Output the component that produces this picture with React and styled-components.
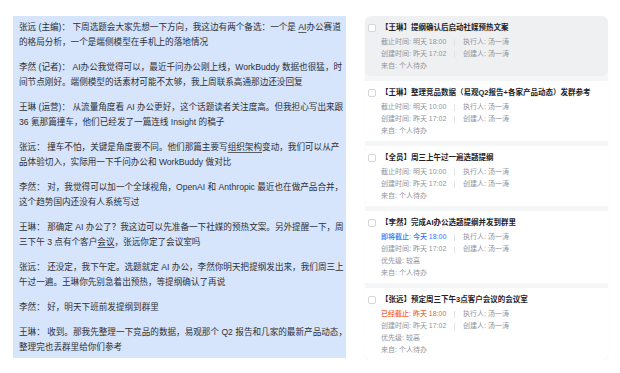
import React from "react";
import styled, { createGlobalStyle } from "styled-components";

const GlobalStyle = createGlobalStyle`
  html, body { margin: 0; padding: 0; background: #ffffff; }
  body {
    font-family: "Liberation Sans", "Noto Sans CJK SC", sans-serif;
    -webkit-font-smoothing: antialiased;
  }
`;

const Page = styled.div`
  display: flex;
  align-items: flex-start;
  gap: 19px;
  padding: 16px 12px 0 13px;
`;

const Transcript = styled.div`
  width: 333px;
  box-sizing: border-box;
  padding: 4px 4px 3px 6px;
  background: #d6e4fc;
  color: #2e3136;
  font-size: 8.6px;
  line-height: 15px;
`;

const Para = styled.p`
  margin: 0 0 10px;
  &:last-child { margin-bottom: 0; }
`;

const Line = styled.span`
  display: block;
  white-space: nowrap;
`;

const Mark = styled.span`
  text-decoration: underline;
  text-decoration-color: #5a5f66;
  text-underline-offset: 2px;
  text-decoration-thickness: 1px;
`;

const TaskList = styled.div`
  width: 243px;
  display: flex;
  flex-direction: column;
  gap: 5px;
  background: #f5f6f7;
  border-radius: 6px;
  overflow: hidden;
  box-shadow: 0 1px 2px rgba(0, 0, 0, 0.04);
`;

const Card = styled.div`
  display: flex;
  align-items: flex-start;
  padding: 5px 8px 4px 3px;
  background: ${(p) => (p.$active ? "#eff0f1" : "#ffffff")};
  border-radius: ${(p) => (p.$active ? "6px" : "0")};
`;

const Check = styled.span`
  flex: none;
  width: 8px;
  height: 8px;
  margin-top: 3px;
  box-sizing: border-box;
  border: 1px solid #d3d6da;
  border-radius: 2px;
  background: #ffffff;
`;

const Body = styled.div`
  margin-left: 5px;
  min-width: 0;
`;

const Title = styled.div`
  font-size: 7.5px;
  line-height: 14px;
  font-weight: 700;
  color: #1f2329;
  white-space: nowrap;
  margin-bottom: 1px;
`;

const MetaRow = styled.div`
  display: flex;
  align-items: center;
  font-size: 7px;
  line-height: 12px;
  color: #8f959e;
  white-space: nowrap;
`;

const MetaCell = styled.span`
  width: ${(p) => (p.$fixed ? "69px" : "auto")};
  color: ${(p) =>
    p.$tone === "soon" ? "#3370ff" : p.$tone === "late" ? "#f5602f" : "inherit"};
  font-weight: ${(p) => (p.$tone ? 500 : 400)};
`;

const Sep = styled.span`
  width: 1px;
  height: 7px;
  background: #e1e3e6;
  margin: 0 8px 0 4px;
`;

const messages = [
  [
    ["张远 (主编)： 下周选题会大家先想一下方向，我这边有两个备选：一个是 ", <Mark key="m">AI</Mark>, "办公赛道"],
    ["的格局分析，一个是端侧模型在手机上的落地情况"],
  ],
  [
    ["李然 (记者)： AI办公我觉得可以，最近千问办公刚上线，WorkBuddy 数据也很猛，时"],
    ["间节点刚好。端侧模型的话素材可能不太够，我上周联系高通那边还没回复"],
  ],
  [
    ["王琳 (运营)： 从流量角度看 AI 办公更好，这个话题读者关注度高。但我担心写出来跟"],
    ["36 氪那篇撞车，他们已经发了一篇连线 Insight 的稿子"],
  ],
  [
    ["张远： 撞车不怕，关键是角度要不同。他们那篇主要写", <Mark key="m">组织架构</Mark>, "变动，我们可以从产"],
    ["品体验切入，实际用一下千问办公和 WorkBuddy 做对比"],
  ],
  [
    ["李然： 对，我觉得可以加一个全球视角，OpenAI 和 Anthropic 最近也在做产品合并，"],
    ["这个趋势国内还没有人系统写过"],
  ],
  [
    ["王琳： 那确定 AI 办公了？我这边可以先准备一下社媒的预热文案。另外提醒一下，周"],
    ["三下午 3 点有个客户", <Mark key="m">会议</Mark>, "，张远你定了会议室吗"],
  ],
  [
    ["张远： 还没定，我下午定。选题就定 AI 办公，李然你明天把提纲发出来，我们周三上"],
    ["午过一遍。王琳你先别急着出预热，等提纲确认了再说"],
  ],
  [["李然： 好，明天下班前发提纲到群里"]],
  [
    ["王琳： 收到。那我先整理一下竞品的数据，易观那个 Q2 报告和几家的最新产品动态，"],
    ["整理完也丢群里给你们参考"],
  ],
];

const tasks = [
  {
    title: "【王琳】提纲确认后启动社媒预热文案",
    due: "截止时间: 明天 18:00",
    active: true,
  },
  {
    title: "【王琳】整理竞品数据（易观Q2报告+各家产品动态）发群参考",
    due: "截止时间: 明天 10:00",
  },
  {
    title: "【全员】周三上午过一遍选题提纲",
    due: "截止时间: 明天 10:00",
  },
  {
    title: "【李然】完成AI办公选题提纲并发到群里",
    due: "即将截止: 今天 18:00",
    tone: "soon",
    priority: "优先级: 较高",
  },
  {
    title: "【张远】预定周三下午3点客户会议的会议室",
    due: "已经截止: 昨天 18:00",
    tone: "late",
    priority: "优先级: 较高",
  },
];

export default function App() {
  return (
    <>
      <GlobalStyle />
      <Page>
        <Transcript>
          {messages.map((lines, i) => (
            <Para key={i}>
              {lines.map((parts, j) => (
                <Line key={j}>{parts}</Line>
              ))}
            </Para>
          ))}
        </Transcript>
        <TaskList>
          {tasks.map((t, i) => (
            <Card key={i} $active={t.active}>
              <Check />
              <Body>
                <Title>{t.title}</Title>
                <MetaRow>
                  <MetaCell $fixed $tone={t.tone}>{t.due}</MetaCell>
                  <Sep />
                  <MetaCell>执行人: 汤一涛</MetaCell>
                </MetaRow>
                <MetaRow>
                  <MetaCell $fixed>创建时间: 昨天 17:02</MetaCell>
                  <Sep />
                  <MetaCell>创建人: 汤一涛</MetaCell>
                </MetaRow>
                {t.priority && (
                  <MetaRow>
                    <MetaCell>{t.priority}</MetaCell>
                  </MetaRow>
                )}
                <MetaRow>
                  <MetaCell>来自: 个人待办</MetaCell>
                </MetaRow>
              </Body>
            </Card>
          ))}
        </TaskList>
      </Page>
    </>
  );
}
